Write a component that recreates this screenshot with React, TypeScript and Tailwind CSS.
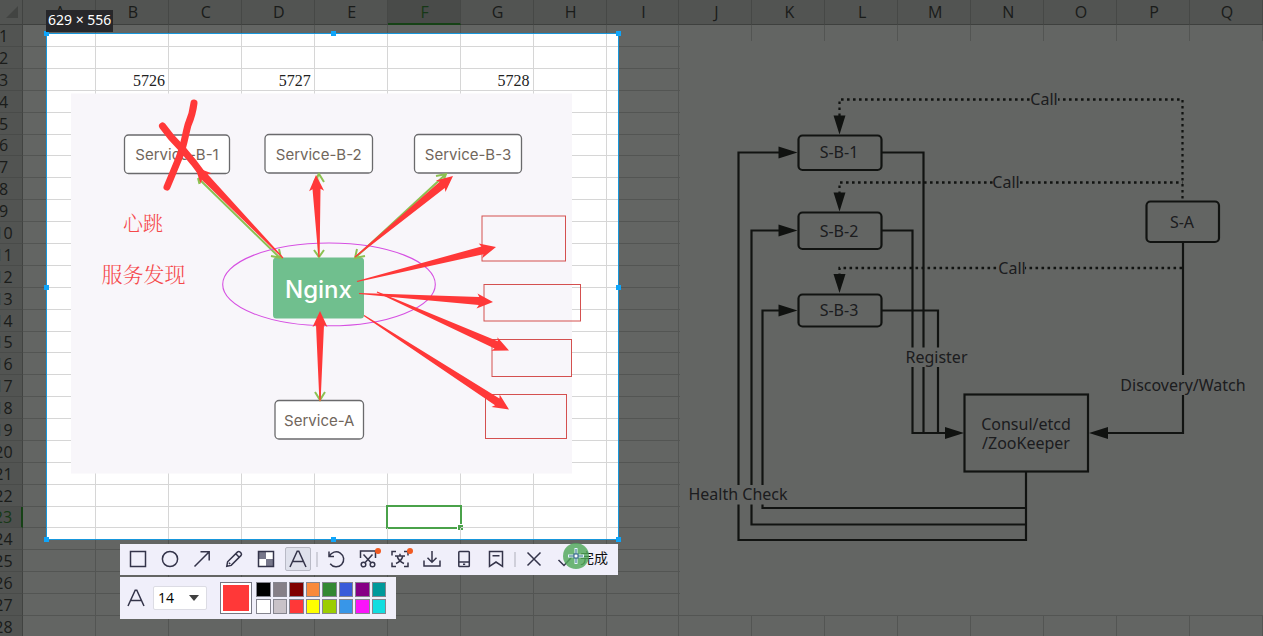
import React from "react";

const COLUMNS = "ABCDEFGHIJKLMNOPQ".split("");
const ROWS = Array.from({ length: 28 }, (_, i) => i + 1);
const SHORT_ROWS = [6, 15, 23];
const VALUES: Record<string, string> = { B3: "5726", D3: "5727", G3: "5728" };

function Sheet() {
  return (
    <table className="-ml-[15px] w-[calc(100%+15px)] min-w-[1278px] table-fixed border-separate border-spacing-0 bg-white font-['Open_Sans','Noto_Sans',sans-serif] text-base leading-5 text-[#454545]">
      <thead>
        <tr className="h-[25px]">
          <th className="w-[38px] border-r border-b border-r-[#a8a8a8] border-b-[#a0a0a0] bg-[#d2d2d2] p-0">
            <svg width="12" height="12" className="ml-[21px] block" aria-hidden="true">
              <path d="M12 0V12H0Z" fill="#ababab" />
            </svg>
          </th>
          {COLUMNS.map((c) => (
            <th
              key={c}
              scope="col"
              className={
                c === "F"
                  ? "border-r border-b-2 border-r-[#b4b4b4] border-b-[#3aa53a] bg-[#bcbcbc] py-0 pr-0 pl-[2px] font-normal text-[#3c8c3c]"
                  : "border-r border-b border-r-[#b4b4b4] border-b-[#a0a0a0] bg-[#d2d2d2] py-0 pr-0 pl-[2px] font-normal"
              }
            >
              {c}
            </th>
          ))}
        </tr>
      </thead>
      <tbody>
        {ROWS.map((r) => (
          <tr key={r} className={SHORT_ROWS.includes(r) ? "h-[21px]" : "h-[22px]"}>
            <th
              scope="row"
              className={
                r === 23
                  ? "border-r-2 border-b border-r-[#3aa53a] border-b-[#bcbcbc] bg-[#c6c6c6] p-0 font-normal text-[#3c8c3c]"
                  : "border-r border-b border-r-[#a8a8a8] border-b-[#bcbcbc] bg-[#d2d2d2] p-0 font-normal"
              }
            >
              {r}
            </th>
            {COLUMNS.map((c) => (
              <td
                key={c}
                className="relative border-r border-b border-[#d6d6d6] pt-[2px] pr-[3px] pb-0 pl-0 text-right font-['Liberation_Serif',serif] text-base leading-[18px] text-[#222]"
              >
                {VALUES[c + r]}
                {c + r === "F23" && (
                  <span className="absolute -top-[2px] -right-[2px] -bottom-[2px] -left-[2px] border-2 border-[#4aa24a]">
                    <span className="absolute -right-[3px] -bottom-[3px] size-[6px] border-t border-l border-white bg-[#4aa24a]" />
                  </span>
                )}
              </td>
            ))}
          </tr>
        ))}
      </tbody>
    </table>
  );
}

function taper(x1: number, y1: number, x2: number, y2: number) {
  const len = Math.hypot(x2 - x1, y2 - y1);
  const ux = (x2 - x1) / len;
  const uy = (y2 - y1) / len;
  const at = (d: number, w: number) => `${x1 + ux * d - uy * w},${y1 + uy * d + ux * w}`;
  return [
    at(0, 0.6), at(len - 14, 4), at(len - 16, 7.5), at(len, 0),
    at(len - 16, -7.5), at(len - 14, -4), at(0, -0.6),
  ].join(" ");
}

const RED_ARROWS = [
  [283, 258, 195, 167],
  [319, 257, 316, 175],
  [355, 257, 453, 176],
  [357, 281.5, 496, 247],
  [359, 293.5, 493, 302],
  [377, 292, 509, 350.5],
  [364, 315.5, 509, 409.5],
  [320, 401, 320, 311],
];

const SERVICES = [
  { name: "Service-B-1", x: 124.5, y: 135, w: 105 },
  { name: "Service-B-2", x: 265, y: 134.5, w: 107.5 },
  { name: "Service-B-3", x: 414.5, y: 134.5, w: 107 },
  { name: "Service-A", x: 275, y: 400.5, w: 88.5 },
];

function NginxPicture() {
  return (
    <svg
      viewBox="71 94 501 380"
      width="501"
      height="380"
      className="absolute top-[94px] left-[71px] overflow-visible"
      role="img"
      aria-label="Nginx"
    >
      <rect x="71" y="93.5" width="501" height="380" fill="#f8f6fa" />
      {SERVICES.map((s) => (
        <g key={s.name}>
          <rect x={s.x} y={s.y} width={s.w} height="38.5" rx="4" fill="#fff" stroke="#6a6a6c" strokeWidth="1.3" />
          <text
            x={s.x + s.w / 2}
            y={s.y + 25}
            textAnchor="middle"
            className="fill-[#71665c] font-[Inter,sans-serif] text-[15px]"
          >
            {s.name}
          </text>
        </g>
      ))}
      <rect x="273" y="257.5" width="91" height="61" rx="3.5" fill="#70bf8e" />
      <text x="318.5" y="298" textAnchor="middle" className="fill-white font-[Inter,sans-serif] text-[24px] font-medium">
        Nginx
      </text>
      <g fill="none" stroke="#8cc152" strokeWidth="2">
        <path d="M198 178L280 258M199.500 184L198 178M271 256L281 258L279 249" />
        <path d="M446 174L355 258M436 176L446 174L443 182M357 249L355 258L365 256" />
        <path d="M318.500 174V257" stroke="#d3ecab" />
        <path d="M314 182L319 174L324 182M314 250L319 257L324 250" />
        <path d="M320 316V400M315 392L320 400L325 392M314.500 326L320 318L325 326" />
      </g>
      <ellipse cx="329" cy="284.400" rx="106.300" ry="41.400" fill="none" stroke="#d650e2" strokeWidth="1.100" />
      <g className="fill-[#f5484a] font-['Noto_Serif_CJK_SC','Noto_Sans_CJK_SC',serif] font-light">
        <text x="143" y="231" textAnchor="middle" className="text-[20px]">心跳</text>
        <text x="143.500" y="282" textAnchor="middle" className="text-[21px]">服务发现</text>
      </g>
      <g fill="none" stroke="#d4504f" strokeWidth="1">
        <rect x="482" y="216" width="83.500" height="45" />
        <rect x="484" y="284.500" width="96.500" height="36.500" />
        <rect x="492" y="339.500" width="79.500" height="37" />
        <rect x="485.500" y="394.500" width="81" height="44" />
      </g>
      {RED_ARROWS.map(([a, b, c, d]) => (
        <polygon key={`${a}-${c}`} points={taper(a, b, c, d)} fill="#ff3838" />
      ))}
      <g fill="none" stroke="#ff3838" strokeWidth="7" strokeLinecap="round" strokeLinejoin="round">
        <path d="M194 103C193 112 191 118 188 125C185 136 184 146 179 158L172 175L167 187" />
        <path d="M162.500 126L171 137L184 151L194 163L206 179" />
      </g>
    </svg>
  );
}

const LABELS = [
  { t: "S-B-1", x: 839, y: 158 },
  { t: "S-B-2", x: 839, y: 237 },
  { t: "S-B-3", x: 839, y: 316 },
  { t: "S-A", x: 1182, y: 228 },
  { t: "Call", x: 1044, y: 105 },
  { t: "Call", x: 1006, y: 188 },
  { t: "Call", x: 1012, y: 274 },
  { t: "Register", x: 936.5, y: 363 },
  { t: "Health Check", x: 738, y: 500 },
  { t: "Discovery/Watch", x: 1183, y: 391 },
  { t: "Consul/etcd", x: 1026, y: 430 },
  { t: "/ZooKeeper", x: 1026, y: 449 },
];

function RegistryPicture() {
  return (
    <div className="absolute top-[41px] right-0 left-[680px] h-[574px] bg-white">
      <svg viewBox="680 41 583 574" width="583" height="574" role="img" aria-label="Consul/etcd/ZooKeeper">
        <g fill="none" stroke="#2e2e2e" strokeWidth="2.300" strokeDasharray="2.600 3.400">
          <path d="M839.500 116V99.500H1182.500V201" />
          <path d="M839.500 194V182.500H1182.500" />
          <path d="M839.500 276V268H1182.500" />
        </g>
        <g fill="none" stroke="#2e2e2e" strokeWidth="2.200">
          <rect x="798.500" y="135.500" width="83" height="34.500" rx="4" />
          <rect x="798.500" y="212.500" width="83" height="36.500" rx="4" />
          <rect x="798.500" y="294.500" width="83" height="32" rx="4" />
          <rect x="1146.500" y="201.500" width="72.500" height="40.500" rx="4" />
          <rect x="964.500" y="394.500" width="123.500" height="77" />
          <path d="M780 152.500H738.500V540H1026V472" />
          <path d="M780 230.500H751.500V524.500H1026" />
          <path d="M780 310.500H762.500V508H1026" />
          <path d="M882 152.500H923.500V433" />
          <path d="M882 230.500H912.500V433H946" />
          <path d="M882 310.500H938V433" />
          <path d="M1183 242V433H1107" />
        </g>
        <g fill="#2a2a2a">
          <path d="M833.500 115.500H845.500L839.500 134.500Z" />
          <path d="M833.500 192.500H845.500L839.500 211.500Z" />
          <path d="M833.500 274H845.500L839.500 293Z" />
          <path d="M778.500 146.500V158.500L797.500 152.500Z" />
          <path d="M778.500 224.500V236.500L797.500 230.500Z" />
          <path d="M778.500 304.500V316.500L797.500 310.500Z" />
          <path d="M945 427V439L964 433Z" />
          <path d="M1108 427V439L1089 433Z" />
        </g>
        <g fill="#fff">
          <rect x="1031" y="92" width="27" height="15" />
          <rect x="993" y="175" width="26" height="15" />
          <rect x="999" y="260" width="26" height="15" />
          <rect x="904" y="347.500" width="66" height="19.500" />
          <rect x="687" y="485" width="103" height="19.500" />
          <rect x="1117" y="375" width="133" height="20" />
        </g>
        {LABELS.map((l) => (
          <text
            key={l.t + l.x}
            x={l.x}
            y={l.y}
            textAnchor="middle"
            className="fill-[#4a4650] font-['Noto_Sans',sans-serif] text-base"
          >
            {l.t}
          </text>
        ))}
      </svg>
    </div>
  );
}

function Glyph({ children }: { children: React.ReactNode }) {
  return (
    <svg
      width="20"
      height="20"
      viewBox="0 0 20 20"
      fill="none"
      stroke="#34344a"
      strokeWidth="1.5"
      aria-hidden="true"
      className="shrink-0"
    >
      {children}
    </svg>
  );
}

const LETTER_A = <path d="M2 18L9.200 2.200H10.800L18 18M4.800 12.500H15.200" />;

const DRAW_TOOLS = [
  { name: "Rectangle", icon: <rect x="2.500" y="2.500" width="15" height="15" /> },
  { name: "Ellipse", icon: <circle cx="10" cy="10" r="7.600" /> },
  { name: "Arrow", icon: <path d="M2.500 17.500L17 3M8.500 2.800H17.200V11.500" /> },
  {
    name: "Pen",
    icon: <path d="M2.800 17.200L3.600 12.800L13.600 2.900Q14.800 2 16 3L17 4Q18 5.200 17.100 6.400L7.200 16.400ZM11.800 4.800L15.200 8.200M5 13.800L6.200 15" />,
  },
  {
    name: "Mosaic",
    icon: (
      <>
        <path d="M10 2.500H17.500V10H10ZM2.500 10H10V17.500H2.500Z" fill="#fff" stroke="none" />
        <path d="M2.500 2.500H10V10H2.500ZM10 10H17.500V17.500H10Z" fill="#77778a" stroke="none" />
        <rect x="2.500" y="2.500" width="15" height="15" />
      </>
    ),
  },
  { name: "Text", icon: LETTER_A },
];

const ACTION_TOOLS = [
  { name: "Undo", badge: false, icon: <path d="M3 2.500V7.500H8M3.300 7.300A7.500 7.500 0 1 1 4.200 14.800" /> },
  {
    name: "Cut out",
    badge: true,
    icon: (
      <>
        <path d="M2.500 9V2H17.500V9" />
        <path d="M5.500 5.500L12.800 13.500M14.500 5.500L7.200 13.500" />
        <circle cx="5.500" cy="15.500" r="2.300" />
        <circle cx="14.500" cy="15.500" r="2.300" />
      </>
    ),
  },
  {
    name: "Translate",
    badge: true,
    icon: (
      <path d="M2 6.500V2.500H6M14 2.500H18V6.500M18 13.500V17.500H14M6 17.500H2V13.500M5 7H15M10 4.800V7M6 14.500C9.500 13 12 10.500 12.800 7M7.200 7C8 10.500 10.500 13 14 14.500" />
    ),
  },
  { name: "Save", badge: false, icon: <path d="M10 2V13M5.500 8.800L10 13.200L14.500 8.800M2 11.500V17H18V11.500" /> },
  {
    name: "Send to phone",
    badge: false,
    icon: (
      <>
        <rect x="4.800" y="2.500" width="10.500" height="15" rx="0.800" />
        <path d="M4.800 13H15.300M9 15.300H11.200" />
      </>
    ),
  },
  { name: "Bookmark", badge: false, icon: <path d="M3.500 2.500H16.500V17.300L10 13L3.500 17.300ZM6.500 6.800H13.500" /> },
];

const SWATCHES = [
  "bg-[#000000]", "bg-[#857f87]", "bg-[#800000]", "bg-[#f98a3c]",
  "bg-[#338833]", "bg-[#3a5bd9]", "bg-[#850085]", "bg-[#00999b]",
  "bg-[#ffffff]", "bg-[#c8c2c8]", "bg-[#ff3838]", "bg-[#ffff00]",
  "bg-[#9ccd00]", "bg-[#3896e8]", "bg-[#fa14fa]", "bg-[#12dde0]",
];

function Divider() {
  return <span className="mx-[2px] h-[15px] w-px bg-[#cfcfda] px-px" />;
}

function Toolbar() {
  return (
    <div className="absolute top-full left-[74px] mt-1 flex flex-col items-start gap-[2px]">
      <div className="relative flex h-[31px] w-[498px] items-center bg-[#f0effa] px-[2px] pb-px">
        {DRAW_TOOLS.map((t) => (
          <button key={t.name} type="button" aria-label={t.name} className="flex w-8 justify-center">
            <span
              className={
                t.name === "Text"
                  ? "flex h-[24px] w-[26px] items-center justify-center rounded-xs border border-[#b9bac6] bg-[#dfe1ec]"
                  : "flex h-[24px] w-[26px] items-center justify-center"
              }
            >
              <Glyph>{t.icon}</Glyph>
            </span>
          </button>
        ))}
        <Divider />
        {ACTION_TOOLS.map((t) => (
          <button key={t.name} type="button" aria-label={t.name} className="relative flex w-8 justify-center">
            <Glyph>{t.icon}</Glyph>
            {t.badge && <span className="absolute -top-px right-[3px] size-[6px] rounded-full bg-[#f15a22]" />}
          </button>
        ))}
        <Divider />
        <button type="button" aria-label="Cancel" className="flex w-8 justify-center">
          <Glyph>
            <path d="M3.500 3.500L16.500 16.500M16.500 3.500L3.500 16.500" />
          </Glyph>
        </button>
        <button
          type="button"
          className="flex items-center gap-[3px] pl-[7px] font-['Noto_Sans_CJK_SC',sans-serif] text-sm leading-4 text-[#111]"
        >
          <Glyph>
            <path d="M1.500 11L7 16.500L18 4.500" />
          </Glyph>
          <span className="pb-1">完成</span>
        </button>
        <svg
          width="26"
          height="26"
          viewBox="0 0 26 26"
          className="absolute -top-px right-[29px]"
          aria-hidden="true"
        >
          <circle cx="13" cy="13" r="13" fill="#4fa85a" fillOpacity="0.82" />
          <path d="M13 5V21M5 13H21" stroke="#e6f4ff" strokeWidth="3" />
          <path d="M13 6V20M6 13H20" stroke="#2c6a80" strokeWidth="1" />
          <rect x="11" y="11" width="4" height="4" fill="#fff" stroke="#235a80" />
        </svg>
      </div>
      <div className="flex h-[42px] items-center bg-[#f0effa] pr-[10px] pl-[6px]">
        <Glyph>{LETTER_A}</Glyph>
        <div className="relative ml-[7px]">
          <select
            aria-label="Font size"
            defaultValue="14"
            className="block h-6 w-[54px] appearance-none rounded-xs border border-[#dcdce4] bg-white pl-1 font-['Open_Sans',sans-serif] text-sm leading-5 text-black"
          >
            <option>12</option>
            <option>14</option>
            <option>16</option>
          </select>
          <svg width="10" height="6" className="pointer-events-none absolute top-[9px] right-2" aria-hidden="true">
            <path d="M0 0H10L5 6Z" fill="#404040" />
          </svg>
        </div>
        <button
          type="button"
          aria-label="Current colour"
          className="ml-[13px] size-8 border border-[#777783] bg-white p-[2px]"
        >
          <span className="block size-full bg-[#ff3838]" />
        </button>
        <div className="ml-1 grid w-[130px] grid-cols-8 gap-[2px]">
          {SWATCHES.map((s) => (
            <button
              key={s}
              type="button"
              aria-label={s.slice(4, 11)}
              className={`h-[15px] border border-[#85858f] ${s}`}
            />
          ))}
        </div>
      </div>
    </div>
  );
}

const HANDLES = [
  "-top-[2px] -left-[2px]",
  "-top-[2px] left-1/2 -ml-[2px]",
  "-top-[2px] -right-[2px]",
  "top-1/2 -left-[2px] -mt-[2px]",
  "top-1/2 -right-[2px] -mt-[2px]",
  "-bottom-[2px] -left-[2px]",
  "-bottom-[2px] left-1/2 -ml-[2px]",
  "-bottom-[2px] -right-[2px]",
];

function Selection() {
  return (
    <div className="absolute top-[33px] left-[46px] h-[507px] w-[573px] shadow-[0_0_0_4000px_rgba(0,4,0,0.61)]">
      <div className="absolute inset-0 border border-[#1797dc]" />
      {HANDLES.map((h) => (
        <span key={h} className={`absolute size-[5px] bg-[#0fa5fa] ${h}`} />
      ))}
      <div className="absolute bottom-full left-0 mb-px flex h-[22px] items-center bg-[#27272a] px-[2px] pb-[3px] font-['Noto_Sans',sans-serif] text-sm leading-5 whitespace-nowrap text-white">
        629 × 556
      </div>
      <Toolbar />
    </div>
  );
}

export default function App() {
  return (
    <main className="relative h-screen w-full overflow-hidden bg-white">
      <Sheet />
      <NginxPicture />
      <RegistryPicture />
      <Selection />
    </main>
  );
}
